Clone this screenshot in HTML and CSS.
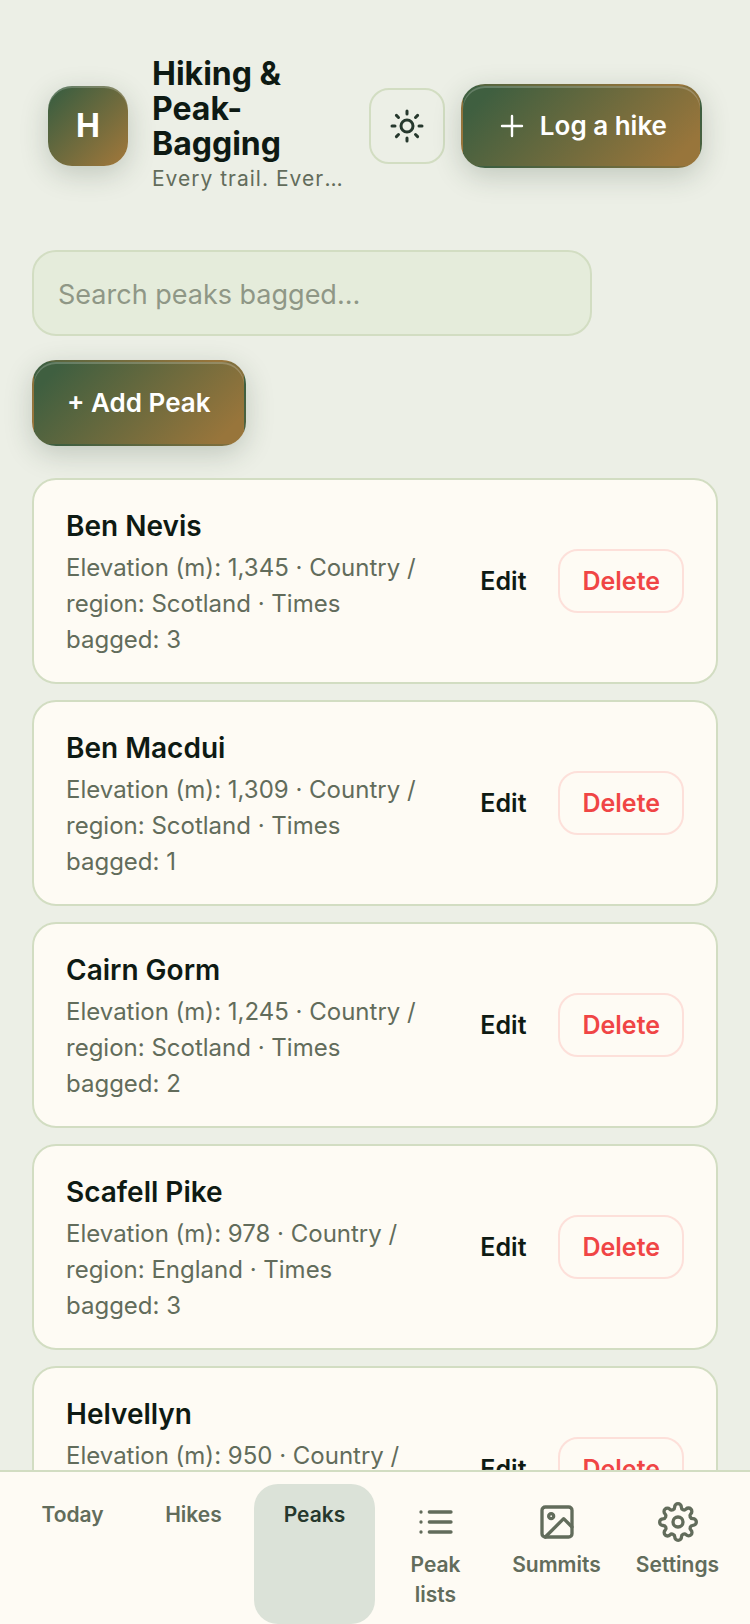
FILE: index.html
```
<!DOCTYPE html>
<html lang="en">
<head>
  <meta charset="UTF-8">
  <meta name="viewport" content="width=device-width, initial-scale=1.0">
  <title>Hiking &amp; Peak-Bagging</title>
  <link rel="stylesheet" href="styles.css">
</head>
<body>
  <header class="header">
    <div class="brand-mark">H</div>
    <div class="brand-text">
      <h1>Hiking &amp; Peak-Bagging</h1>
      <p>Every trail. Every summit.</p>
    </div>
    <div class="header-actions">
      <button type="button" class="icon-btn" aria-label="Toggle theme">
        <svg class="icon-sun" viewBox="0 0 24 24"><circle cx="12" cy="12" r="4"/><path d="M12 2v2M12 20v2M4.93 4.93l1.41 1.41M17.66 17.66l1.41 1.41M2 12h2M20 12h2M6.34 17.66l-1.41 1.41M19.07 4.93l-1.41 1.41"/></svg>
      </button>
      <button type="button" class="btn-primary">
        <svg class="icon-plus" viewBox="0 0 24 24"><path d="M12 4.5v15M4.5 12h15"/></svg>
        Log a hike
      </button>
    </div>
  </header>

  <main>
    <div class="toolbar">
      <input type="search" class="search" placeholder="Search peaks bagged…" aria-label="Search peaks bagged">
      <button type="button" class="btn-primary btn-add">+ Add Peak</button>
    </div>

    <ul class="peak-list">
      <li class="card">
        <div class="card-body">
          <h2>Ben Nevis</h2>
          <p>Elevation (m): 1,345 · Country / region: Scotland · Times bagged: 3</p>
        </div>
        <div class="card-actions">
          <button type="button" class="btn-small">Edit</button>
          <button type="button" class="btn-small btn-danger">Delete</button>
        </div>
      </li>
      <li class="card">
        <div class="card-body">
          <h2>Ben Macdui</h2>
          <p>Elevation (m): 1,309 · Country / region: Scotland · Times bagged: 1</p>
        </div>
        <div class="card-actions">
          <button type="button" class="btn-small">Edit</button>
          <button type="button" class="btn-small btn-danger">Delete</button>
        </div>
      </li>
      <li class="card">
        <div class="card-body">
          <h2>Cairn Gorm</h2>
          <p>Elevation (m): 1,245 · Country / region: Scotland · Times bagged: 2</p>
        </div>
        <div class="card-actions">
          <button type="button" class="btn-small">Edit</button>
          <button type="button" class="btn-small btn-danger">Delete</button>
        </div>
      </li>
      <li class="card">
        <div class="card-body">
          <h2>Scafell Pike</h2>
          <p>Elevation (m): 978 · Country / region: England · Times bagged: 3</p>
        </div>
        <div class="card-actions">
          <button type="button" class="btn-small">Edit</button>
          <button type="button" class="btn-small btn-danger">Delete</button>
        </div>
      </li>
      <li class="card">
        <div class="card-body">
          <h2>Helvellyn</h2>
          <p>Elevation (m): 950 · Country / region: England · Times bagged: 2</p>
        </div>
        <div class="card-actions">
          <button type="button" class="btn-small">Edit</button>
          <button type="button" class="btn-small btn-danger">Delete</button>
        </div>
      </li>
    </ul>
  </main>

  <nav class="tabs">
    <a href="#today">Today</a>
    <a href="#hikes">Hikes</a>
    <a href="#peaks" class="active">Peaks</a>
    <a href="#lists">
      <svg viewBox="0 0 24 24"><path d="M8 6h13M8 12h13M8 18h13M3 6h.01M3 12h.01M3 18h.01"/></svg>
      Peak lists
    </a>
    <a href="#summits">
      <svg viewBox="0 0 24 24"><rect x="3" y="3" width="18" height="18" rx="2"/><circle cx="8.5" cy="8.5" r="1.5"/><path d="M21 15l-5-5L5 21"/></svg>
      Summits
    </a>
    <a href="#settings">
      <svg viewBox="0 0 24 24"><circle cx="12" cy="12" r="3"/><path d="M19.4 15a1.65 1.65 0 0 0 .33 1.82l.06.06a2 2 0 0 1 0 2.83 2 2 0 0 1-2.83 0l-.06-.06a1.65 1.65 0 0 0-1.82-.33 1.65 1.65 0 0 0-1 1.51V21a2 2 0 0 1-2 2 2 2 0 0 1-2-2v-.09A1.65 1.65 0 0 0 9 19.4a1.65 1.65 0 0 0-1.82.33l-.06.06a2 2 0 0 1-2.83 0 2 2 0 0 1 0-2.83l.06-.06a1.65 1.65 0 0 0 .33-1.82 1.65 1.65 0 0 0-1.51-1H3a2 2 0 0 1-2-2 2 2 0 0 1 2-2h.09A1.65 1.65 0 0 0 4.6 9a1.65 1.65 0 0 0-.33-1.82l-.06-.06a2 2 0 0 1 0-2.83 2 2 0 0 1 2.83 0l.06.06a1.65 1.65 0 0 0 1.82.33H9a1.65 1.65 0 0 0 1-1.51V3a2 2 0 0 1 2-2 2 2 0 0 1 2 2v.09a1.65 1.65 0 0 0 1 1.51 1.65 1.65 0 0 0 1.82-.33l.06-.06a2 2 0 0 1 2.83 0 2 2 0 0 1 0 2.83l-.06.06a1.65 1.65 0 0 0-.33 1.82V9a1.65 1.65 0 0 0 1.51 1H21a2 2 0 0 1 2 2 2 2 0 0 1-2 2h-.09a1.65 1.65 0 0 0-1.51 1z"/></svg>
      Settings
    </a>
  </nav>
</body>
</html>
```
FILE: styles.css
```
:root {
  --bg: #ecefe6;
  --surface: #fefbf4;
  --field: #e5ecdb;
  --border: #d2ddc2;
  --text: #0e1a13;
  --muted: #626c5b;
  --accent: linear-gradient(135deg, #3f5f40 10%, #98753b 90%);
  --shadow: 0 8px 28px rgba(40, 64, 44, 0.22);
}

* {
  box-sizing: border-box;
}

html {
  scrollbar-width: none;
}

body {
  margin: 0;
  padding-bottom: 154px;
  background: var(--bg);
  color: var(--text);
  font-family: Inter, "Liberation Sans", sans-serif;
  font-size: 28px;
  line-height: 42px;
}

h1, h2, p, ul {
  margin: 0;
  padding: 0;
}

button, input {
  font: inherit;
}

svg {
  display: block;
  flex-shrink: 0;
  fill: none;
  stroke: currentColor;
  stroke-width: 2;
  stroke-linecap: round;
  stroke-linejoin: round;
}

.header {
  display: flex;
  align-items: center;
  gap: 24px;
  padding: 56px 48px 54px;
}

.brand-mark {
  display: flex;
  align-items: center;
  justify-content: center;
  flex-shrink: 0;
  width: 80px;
  height: 80px;
  border-radius: 24px;
  background: var(--accent);
  box-shadow: var(--shadow), inset 0 2px 0 rgba(255, 255, 255, 0.2);
  color: #fff;
  font-size: 32px;
  font-weight: 700;
}

.brand-text {
  flex: 1;
  min-width: 0;
}

.brand-text h1 {
  font-size: 32px;
  font-weight: 700;
  line-height: 35px;
}

.brand-text p {
  overflow: hidden;
  color: var(--muted);
  font-size: 21px;
  line-height: 35px;
  letter-spacing: 1px;
  white-space: nowrap;
  text-overflow: ellipsis;
}

.header-actions {
  display: flex;
  align-items: center;
  gap: 16px;
}

.icon-btn {
  display: flex;
  align-items: center;
  justify-content: center;
  width: 76px;
  height: 76px;
  padding: 0;
  border: 2px solid var(--border);
  border-radius: 20px;
  background: transparent;
  color: #26382d;
}

.icon-sun {
  width: 36px;
  height: 36px;
}

.icon-plus {
  width: 32px;
  height: 32px;
  stroke-width: 1.8;
}

.btn-primary {
  display: flex;
  align-items: center;
  gap: 12px;
  height: 84px;
  padding: 0 33px;
  border: 2px solid transparent;
  border-radius: 24px;
  background: var(--accent);
  box-shadow: var(--shadow), inset 0 2px 0 rgba(255, 255, 255, 0.2);
  color: #fff;
  font-size: 26px;
  font-weight: 600;
  white-space: nowrap;
}

main {
  padding: 0 32px;
}

.toolbar {
  display: flex;
  flex-wrap: wrap;
  gap: 24px;
  margin-bottom: 32px;
}

.search {
  flex: 1 1 560px;
  max-width: 560px;
  min-width: 0;
  height: 86px;
  padding: 2px 24px 0;
  border: 2px solid var(--border);
  border-radius: 24px;
  background: var(--field);
  color: var(--text);
  font-size: 27px;
  appearance: none;
}

.search::placeholder {
  color: #8f9786;
}

.btn-add {
  height: 86px;
}

.peak-list {
  display: flex;
  flex-direction: column;
  gap: 16px;
  list-style: none;
}

.card {
  display: flex;
  align-items: center;
  justify-content: space-between;
  gap: 32px;
  padding: 24px 32px;
  border: 2px solid var(--border);
  border-radius: 24px;
  background: var(--surface);
}

.card-body {
  flex: 1;
  min-width: 0;
}

.card h2 {
  margin-bottom: 2px;
  font-size: 28px;
  font-weight: 600;
  line-height: 44px;
}

.card p {
  color: var(--muted);
  font-size: 24px;
  line-height: 36px;
}

.card-actions {
  display: flex;
  gap: 8px;
}

.btn-small {
  height: 64px;
  padding: 0 22px;
  border: 2px solid transparent;
  border-radius: 20px;
  background: transparent;
  color: var(--text);
  font-size: 25px;
  font-weight: 600;
}

.btn-danger {
  border-color: #fde0da;
  color: #f04545;
}

.tabs {
  position: fixed;
  right: 0;
  bottom: 0;
  left: 0;
  display: grid;
  grid-template-columns: repeat(6, 1fr);
  padding: 12px 12px 0;
  border-top: 2px solid var(--border);
  background: var(--surface);
}

.tabs a {
  display: flex;
  flex-direction: column;
  align-items: center;
  gap: 8px;
  padding: 16px 16px 14px;
  border-radius: 24px;
  color: var(--muted);
  font-size: 21px;
  font-weight: 600;
  line-height: 30px;
  text-align: center;
  text-decoration: none;
}

.tabs svg {
  width: 40px;
  height: 40px;
  margin-top: 2px;
}

.tabs .active {
  background: #dbe2d8;
  color: #26382d;
}
```
